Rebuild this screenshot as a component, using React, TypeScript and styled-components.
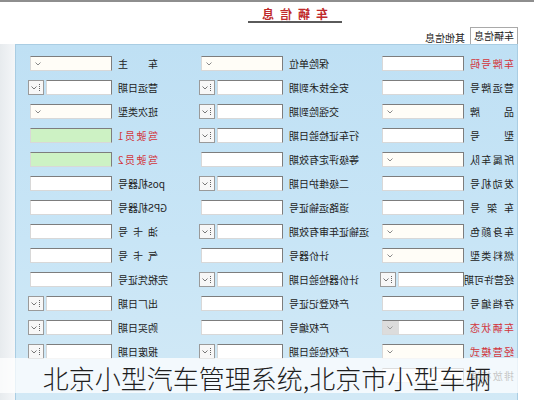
import React from 'react';
import styled, { createGlobalStyle } from 'styled-components';

const Global = createGlobalStyle`
  html, body { margin: 0; padding: 0; width: 534px; height: 400px; overflow: hidden; background: #ffffff; }
  body { font-family: "Noto Sans CJK SC", "Noto Sans", sans-serif; }
  * { box-sizing: border-box; }
`;

const Stage = styled.div`
  position: relative;
  width: 534px;
  height: 400px;
  overflow: hidden;
  background: #ffffff;
`;

/* The reference screenshot is horizontally mirrored; the form is laid out normally and flipped. */
const Mirror = styled.div`
  width: 534px;
  height: 400px;
  transform: scaleX(-1);
  display: flex;
  flex-direction: column;
  border-top: 2px solid #8e8e8e;
`;

const Header = styled.div`
  display: flex;
  justify-content: center;
  padding-right: 56px;
`;

const Title = styled.div`
  margin-top: 5px;
  padding: 0 8px 0 14px;
  font-size: 12px;
  line-height: 14px;
  font-weight: 700;
  letter-spacing: 6px;
  color: #c02a2c;
  border-bottom: 2px solid #5a5a5a;
`;

const Tabs = styled.div`
  display: flex;
  align-items: flex-end;
  gap: 3px;
  margin-top: 4px;
  padding-left: 16px;
  height: 17px;
`;

const Tab = styled.div<{ $active?: boolean }>`
  height: ${p => (p.$active ? 17 : 15)}px;
  padding: 0 ${p => (p.$active ? 3 : 1)}px;
  font-size: 10px;
  line-height: 15px;
  color: #222;
  background: #ffffff;
  border: 1px solid ${p => (p.$active ? '#a9a9a9' : 'transparent')};
  border-bottom: none;
`;

const Body = styled.div`
  flex: 1;
  display: flex;
  padding-left: 16px;
`;

const Panel = styled.div`
  width: 503px;
  background: linear-gradient(180deg, #bfe0f4 0%, #c8e5f6 55%, #d2e9f6 100%);
  border: 1px solid #a9cde3;
  border-bottom: none;
`;

const Strip = styled.div`
  flex: 1;
  background: linear-gradient(90deg, #f4f6f8, #e7ebee);
`;

const Grid = styled.div`
  display: grid;
  grid-template-columns: 132px 181px 171px;
  grid-auto-rows: 15px;
  row-gap: 9px;
  padding: 11px 0 0 3px;
`;

const Field = styled.div`
  display: grid;
  grid-template-columns: 1fr 82px;
  column-gap: 6px;
  align-items: center;
`;

const Label = styled.span<{ $red?: boolean; $wide?: boolean }>`
  justify-self: ${p => (p.$wide ? 'start' : 'end')};
  min-width: ${p => (p.$wide ? 44 : 40)}px;
  font-size: 10px;
  line-height: 15px;
  white-space: nowrap;
  text-align: justify;
  text-align-last: justify;
  color: ${p => (p.$red ? '#d2353b' : '#222222')};
`;

const Box = styled.div<{ $fill?: string; $w?: number }>`
  width: ${p => (p.$w ? `${p.$w}px` : '100%')};
  height: 15px;
  display: flex;
  align-items: center;
  justify-content: flex-end;
  padding-right: 4px;
  background: ${p => p.$fill || '#ffffff'};
  border: 1px solid;
  border-color: #7d7d7d #d8d8d8 #d8d8d8 #7d7d7d;
`;

const DateWrap = styled.div`
  display: flex;
  gap: 2px;
  width: 84px;
`;

const DropBtn = styled.div`
  width: 16px;
  height: 15px;
  display: flex;
  align-items: center;
  justify-content: center;
  gap: 2px;
  background: #f7f7f7;
  border: 1px solid #9a9a9a;
`;

const Dots = styled.span`
  width: 1px;
  height: 7px;
  border-left: 1px dotted #666;
`;

const Caption = styled.div`
  position: absolute;
  left: 0;
  right: 0;
  top: 358px;
  height: 35px;
  padding-top: 5px;
  background: rgba(255, 255, 255, 0.74);
  text-align: center;
  font-family: "Noto Sans CJK SC", sans-serif;
  font-weight: 300;
  font-size: 26px;
  line-height: 30px;
  color: #1f1f1f;
  white-space: nowrap;
`;

const Chevron = ({ color = '#8a8a8a' }: { color?: string }) => (
  <svg width="6" height="4" viewBox="0 0 6 4">
    <polyline points="0.5,0.5 3,3 5.5,0.5" fill="none" stroke={color} strokeWidth="1" />
  </svg>
);

type Kind = 'text' | 'select' | 'date' | 'green' | 'disabled';
type Item = { label: string; kind: Kind; red?: boolean } | null;

const rows: [Item, Item, Item][] = [
  [{ label: '车牌号码', kind: 'text', red: true }, { label: '保险单位', kind: 'select' }, { label: '车 主', kind: 'select' }],
  [{ label: '营运牌号', kind: 'text' }, { label: '安全技术到期', kind: 'date' }, { label: '营运日期', kind: 'date' }],
  [{ label: '品 牌', kind: 'select' }, { label: '交强险到期', kind: 'date' }, { label: '班次类型', kind: 'select' }],
  [{ label: '型 号', kind: 'text' }, { label: '行车证检验日期', kind: 'date' }, { label: '驾驶员1', kind: 'green', red: true }],
  [{ label: '所属车队', kind: 'select' }, { label: '等级评定有效期', kind: 'text' }, { label: '驾驶员2', kind: 'green', red: true }],
  [{ label: '发动机号', kind: 'text' }, { label: '二级维护日期', kind: 'date' }, { label: 'pos机器号', kind: 'text' }],
  [{ label: '车 架 号', kind: 'text' }, { label: '道路运输证号', kind: 'text' }, { label: 'GPS机器号', kind: 'text' }],
  [{ label: '车身颜色', kind: 'select' }, { label: '运输证年审有效期', kind: 'date' }, { label: '油 卡 号', kind: 'text' }],
  [{ label: '燃料类型', kind: 'select' }, { label: '计价器号', kind: 'text' }, { label: '气 卡 号', kind: 'text' }],
  [{ label: '经营许可期', kind: 'date' }, { label: '计价器检验日期', kind: 'date' }, { label: '完税凭证号', kind: 'text' }],
  [{ label: '存档编号', kind: 'text' }, { label: '产权登记证号', kind: 'text' }, { label: '出厂日期', kind: 'date' }],
  [{ label: '车辆状态', kind: 'disabled', red: true }, { label: '产权编号', kind: 'text' }, { label: '购买日期', kind: 'date' }],
  [{ label: '经营模式', kind: 'select', red: true }, { label: '产权检验日期', kind: 'date' }, { label: '报废日期', kind: 'date' }],
  [{ label: '排放标准', kind: 'text' }, null, null],
];

const Control = ({ kind }: { kind: Kind }) => {
  switch (kind) {
    case 'select':
      return (
        <Box $fill="#fffdf7">
          <Chevron />
        </Box>
      );
    case 'disabled':
      return (
        <Box $fill="linear-gradient(90deg, #ffffff 0%, #ffffff 80%, #dcdcdc 80%)">
          <Chevron color="#999" />
        </Box>
      );
    case 'date':
      return (
        <DateWrap>
          <Box $w={66} />
          <DropBtn>
            <Dots />
            <Chevron color="#777" />
          </DropBtn>
        </DateWrap>
      );
    case 'green':
      return <Box $fill="#cdf2c4" />;
    default:
      return <Box />;
  }
};

export default function App() {
  return (
    <Stage>
      <Global />
      <Mirror>
        <Header>
          <Title>车辆信息</Title>
        </Header>
        <Tabs>
          <Tab $active>车辆信息</Tab>
          <Tab>其他信息</Tab>
        </Tabs>
        <Body>
          <Panel>
            <Grid>
              {rows.map((row, r) =>
                row.map((item, c) =>
                  item ? (
                    <Field key={`${r}-${c}`}>
                      <Label $red={item.red} $wide={c === 0}>
                        {item.label}
                      </Label>
                      <Control kind={item.kind} />
                    </Field>
                  ) : (
                    <div key={`${r}-${c}`} />
                  )
                )
              )}
            </Grid>
          </Panel>
          <Strip />
        </Body>
      </Mirror>
      <Caption>北京小型汽车管理系统,北京市小型车辆</Caption>
    </Stage>
  );
}
